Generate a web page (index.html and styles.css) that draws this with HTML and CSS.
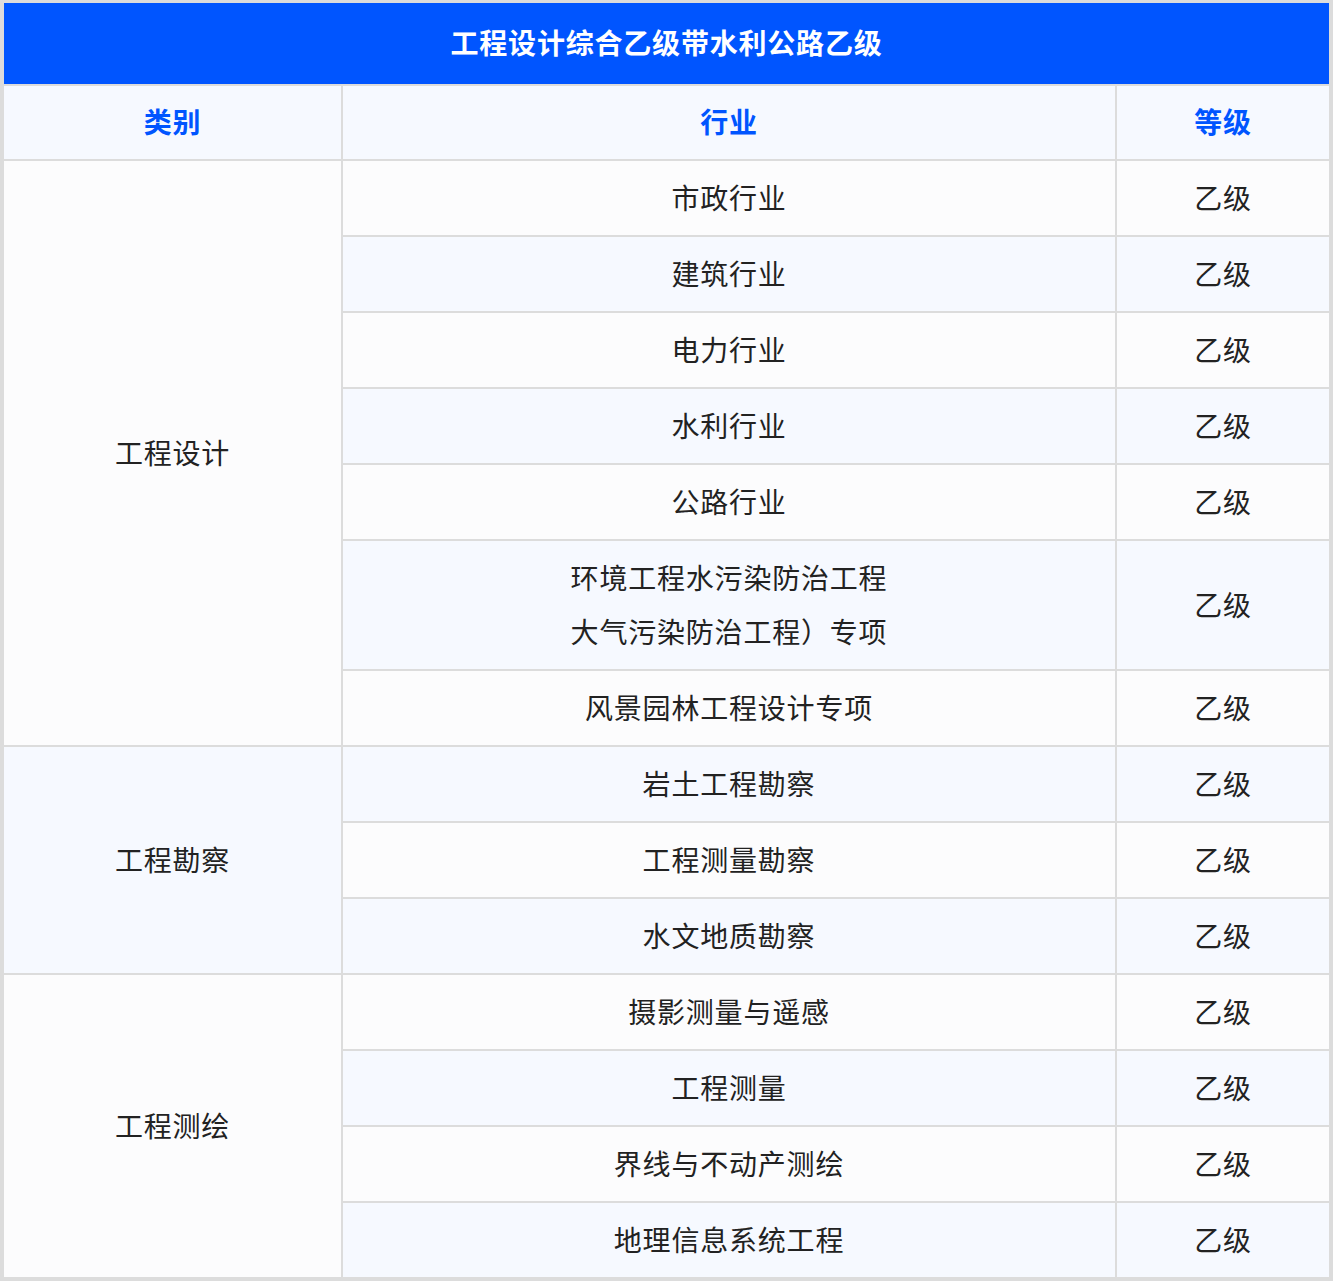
FILE: index.html
```html
<!DOCTYPE html>
<html lang="zh-CN">
<head>
<meta charset="utf-8">
<title>工程设计综合乙级带水利公路乙级</title>
<link rel="stylesheet" href="styles.css">
</head>
<body>
<div class="frame">
<table class="qual">
  <colgroup>
    <col class="c1">
    <col class="c2">
    <col class="c3">
  </colgroup>
  <thead>
    <tr><th colspan="3" class="title">工程设计综合乙级带水利公路乙级</th></tr>
    <tr class="head"><th>类别</th><th>行业</th><th class="lc">等级</th></tr>
  </thead>
  <tbody>
    <tr><td rowspan="7">工程设计</td><td>市政行业</td><td class="lc">乙级</td></tr>
    <tr><td>建筑行业</td><td class="lc">乙级</td></tr>
    <tr><td>电力行业</td><td class="lc">乙级</td></tr>
    <tr><td>水利行业</td><td class="lc">乙级</td></tr>
    <tr><td>公路行业</td><td class="lc">乙级</td></tr>
    <tr><td>环境工程水污染防治工程<br>大气污染防治工程）专项</td><td class="lc">乙级</td></tr>
    <tr><td>风景园林工程设计专项</td><td class="lc">乙级</td></tr>
    <tr><td rowspan="3">工程勘察</td><td>岩土工程勘察</td><td class="lc">乙级</td></tr>
    <tr><td>工程测量勘察</td><td class="lc">乙级</td></tr>
    <tr><td>水文地质勘察</td><td class="lc">乙级</td></tr>
    <tr><td rowspan="4" class="end">工程测绘</td><td>摄影测量与遥感</td><td class="lc">乙级</td></tr>
    <tr><td>工程测量</td><td class="lc">乙级</td></tr>
    <tr><td>界线与不动产测绘</td><td class="lc">乙级</td></tr>
    <tr><td>地理信息系统工程</td><td class="lc">乙级</td></tr>
  </tbody>
</table>
</div>
</body>
</html>
```
FILE: styles.css
```css
html, body {
  margin: 0;
  padding: 0;
  background: #ffffff;
}
body {
  font-family: "Noto Sans CJK SC", "Noto Sans", sans-serif;
}
.frame {
  width: 1325px;
  background: #dcdcdc;
  padding: 3px 4px 4px 4px;
}
.qual {
  width: 1325px;
  border-collapse: separate;
  border-spacing: 0;
  table-layout: fixed;
  font-size: 28px;
  letter-spacing: 0.8px;
  color: #222222;
}
.c1 { width: 339px; }
.c2 { width: 774px; }
.c3 { width: 212px; }
.qual th, .qual td {
  border-right: 2px solid #dcdcdc;
  border-bottom: 2px solid #dcdcdc;
  text-align: center;
  vertical-align: middle;
  padding: 9px 0 11px;
  line-height: 54px;
}
.qual .lc {
  border-right: none;
}
.qual tbody tr:last-child td,
.qual td.end {
  border-bottom: none;
}
.qual th.title {
  background: #0055ff;
  color: #ffffff;
  font-weight: 700;
  padding: 12px 0 15px;
  border-right: none;
}
.qual tr.head th {
  background: #f6f9ff;
  color: #0055ff;
  font-weight: 700;
  padding: 8px 0 11px;
}
.qual tbody tr:nth-child(odd) td {
  background: #fcfcfd;
}
.qual tbody tr:nth-child(even) td {
  background: #f6f9ff;
}
```
